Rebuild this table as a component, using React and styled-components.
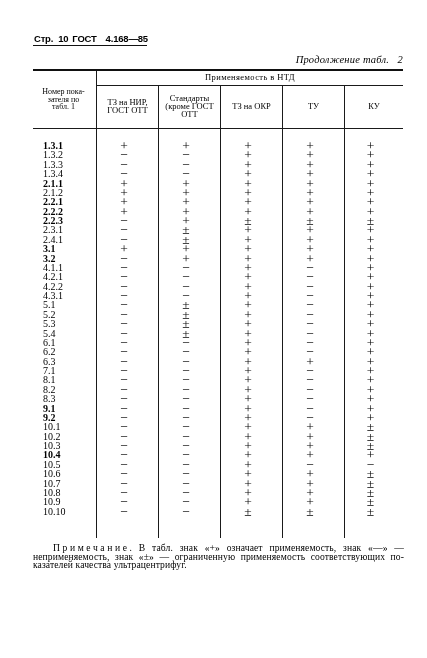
import React from 'react'
import styled, { createGlobalStyle } from 'styled-components'

const GlobalStyle = createGlobalStyle`
  body {
    margin: 0;
    background: #fff;
    color: #000;
    font-family: "Liberation Serif", "DejaVu Serif", serif;
    -webkit-font-smoothing: antialiased;
  }
`

const Page = styled.div`
  width: 427px;
  height: 658px;
  box-sizing: border-box;
  padding: 33px 24px 0 33px;
  will-change: transform;
`

const RunningHead = styled.div`
  display: flex;
  align-items: baseline;
  width: 114px;
  height: 13px;
  padding-left: 1px;
  box-sizing: border-box;
  white-space: nowrap;
  border-bottom: 1.5px solid #111;
  font-family: "Liberation Sans", Arial, sans-serif;
  font-weight: bold;
  font-size: 9.5px;
  line-height: 12px;
  letter-spacing: -0.2px;
`

const HeadPart = styled.span`
  margin-left: ${p => p.gap || 0}px;
`

const Caption = styled.div`
  margin-top: 7px;
  height: 13px;
  text-align: right;
  font-style: italic;
  font-size: 10.5px;
  line-height: 13px;
  letter-spacing: 0.2px;
`

const Table = styled.div`
  margin-top: 3px;
  display: grid;
  grid-template-columns: 63px 62px 62px 62px 62px 59px;
  grid-template-rows: 15px 43px auto;
  border-top: 2px solid #111;
`

const HeadCell = styled.div`
  display: flex;
  align-items: center;
  justify-content: center;
  text-align: center;
  font-size: ${p => p.size || 8}px;
  line-height: ${p => p.lh || 7.8}px;
  border-left: ${p => (p.first ? 'none' : '1px solid #1a1a1a')};
  border-bottom: 1.5px solid #1a1a1a;
`

const Corner = styled(HeadCell)`
  grid-row: 1 / 3;
  grid-column: 1;
  padding-right: 2px;
`

const Group = styled(HeadCell)`
  grid-column: 2 / 7;
  border-bottom-width: 1px;
  letter-spacing: 0.4px;
`

const Column = styled.div`
  display: flex;
  flex-direction: column;
  align-items: ${p => (p.labels ? 'flex-start' : 'center')};
  padding: ${p => (p.labels ? '12px 0 22px 10px' : '12px 7px 22px 0')};
  border-left: ${p => (p.labels ? 'none' : '1px solid #1a1a1a')};
`

const Label = styled.div`
  height: 9.385px;
  font-size: 10px;
  line-height: 9.385px;
  font-weight: ${p => (p.bold ? 'bold' : 'normal')};
`

const Mark = styled.div`
  height: 9.385px;
  font-size: 13.5px;
  line-height: 9.385px;
`

const Note = styled.div`
  margin-top: 6px;
  margin-right: -1px;
  font-size: 9.6px;
  line-height: 8.7px;
  letter-spacing: 0.1px;
`

const NoteLine = styled.div`
  text-align: justify;
  text-align-last: ${p => (p.last ? 'left' : 'justify')};
  text-indent: ${p => (p.indent ? '20px' : '0')};
`

const Spaced = styled.span`
  letter-spacing: 2.6px;
`

const labels = [
  '1.3.1', '1.3.2', '1.3.3', '1.3.4', '2.1.1', '2.1.2', '2.2.1', '2.2.2', '2.2.3', '2.3.1',
  '2.4.1', '3.1', '3.2', '4.1.1', '4.2.1', '4.2.2', '4.3.1', '5.1', '5.2', '5.3',
  '5.4', '6.1', '6.2', '6.3', '7.1', '8.1', '8.2', '8.3', '9.1', '9.2',
  '10.1', '10.2', '10.3', '10.4', '10.5', '10.6', '10.7', '10.8', '10.9', '10.10'
]

const boldLabels = ['1.3.1', '2.1.1', '2.2.1', '2.2.2', '2.2.3', '3.1', '3.2', '9.1', '9.2', '10.4']

// one string per column, one sign per row
const columns = [
  '+---++++---+-' + '-'.repeat(27),
  '+---+++++±±++' + '----±±±±' + '-'.repeat(19),
  '++++++++±' + '+'.repeat(30) + '±',
  '++++++++±++++' + '--' + '--------' + '+' + '------' + '++++' + '-' + '++++' + '±',
  '++++++++±' + '+'.repeat(21) + '±±±+-±±±±±'
]

const sign = c => (c === '-' ? '\u2212' : c)

const App = () => {
  return (
    <Page>
      <GlobalStyle />
      <RunningHead>
        <HeadPart>Стр.</HeadPart>
        <HeadPart gap={5}>10</HeadPart>
        <HeadPart gap={4}>ГОСТ</HeadPart>
        <HeadPart gap={9}>4.168—85</HeadPart>
      </RunningHead>

      <Caption>Продолжение табл.&nbsp;&nbsp; 2</Caption>

      <Table>
        <Corner first>
          <div>Номер пока-<br />зателя по<br />табл. 1</div>
        </Corner>
        <Group size={8.5}>Применяемость в НТД</Group>
        <HeadCell size={8.5}><div>ТЗ на НИР,<br />ГОСТ ОТТ</div></HeadCell>
        <HeadCell size={8.5}><div>Стандарты<br />(кроме ГОСТ<br />ОТТ</div></HeadCell>
        <HeadCell size={8.5}>ТЗ на ОКР</HeadCell>
        <HeadCell size={8.5}>ТУ</HeadCell>
        <HeadCell size={8.5}>КУ</HeadCell>

        <Column labels>
          {labels.map(l => (
            <Label key={l} bold={boldLabels.includes(l)}>{l}</Label>
          ))}
        </Column>
        {columns.map((col, i) => (
          <Column key={i}>
            {[...col].map((c, j) => (
              <Mark key={j}>{sign(c)}</Mark>
            ))}
          </Column>
        ))}
      </Table>

      <Note>
        <NoteLine indent>
          <Spaced>Примечание</Spaced>. В табл. знак «+» означает применяемость, знак «—» —
        </NoteLine>
        <NoteLine>
          неприменяемость, знак «±» — ограниченную применяемость соответствующих по-
        </NoteLine>
        <NoteLine last>казателей качества ультрацентрифуг.</NoteLine>
      </Note>
    </Page>
  )
}

export default App
